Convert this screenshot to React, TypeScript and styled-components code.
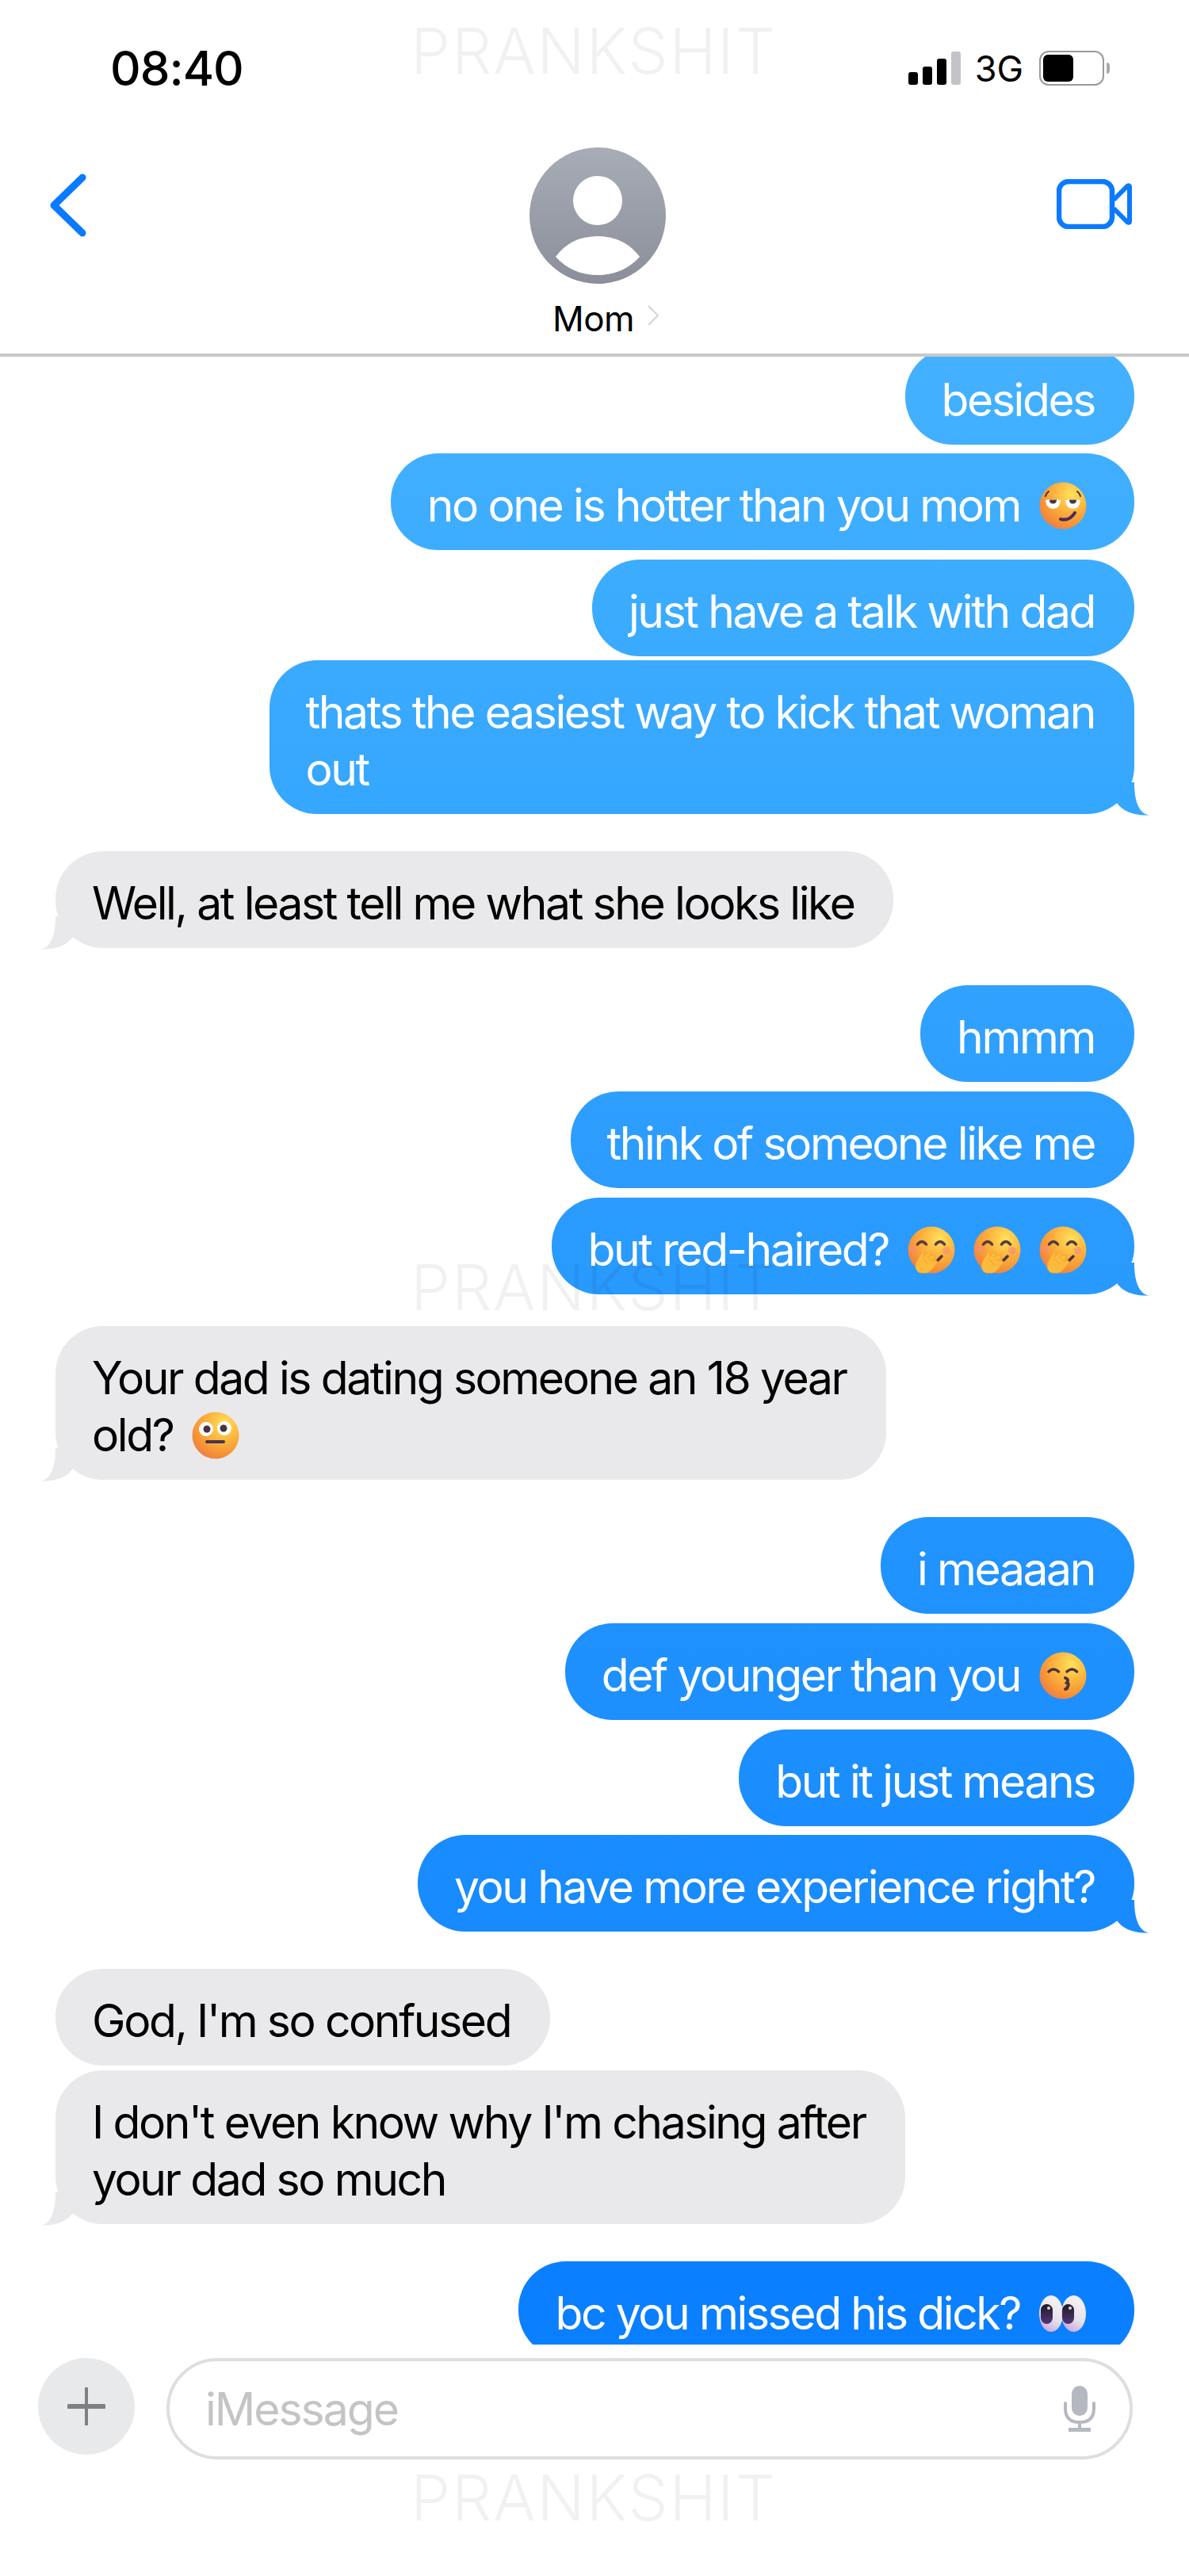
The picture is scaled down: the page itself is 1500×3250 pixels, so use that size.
import type { FC, ReactNode } from 'react';
import styled, { createGlobalStyle } from 'styled-components';

const GlobalStyle = createGlobalStyle`
  html, body {
    margin: 0;
    padding: 0;
    background: #fff;
  }
`;

const Face: FC<{ id: string; children: ReactNode }> = ({ id, children }) => (
  <EmojiSvg viewBox="0 0 60 60">
    <defs>
      <radialGradient id={id} cx="0.68" cy="0.26" r="0.82">
        <stop offset="0" stopColor="#ffe25a" />
        <stop offset="0.42" stopColor="#fdb63f" />
        <stop offset="0.82" stopColor="#f58f35" />
        <stop offset="0.97" stopColor="#ee7f4e" />
        <stop offset="1" stopColor="#ee6f8a" />
      </radialGradient>
    </defs>
    <circle cx="30" cy="30" r="29.5" fill={`url(#${id})`} />
    {children}
  </EmojiSvg>
);

const SmirkEmoji = () => (
  <Face id="smirk">
    <path d="M12 12q-3 2-4 6M48 12q3 2 4 6" fill="none" stroke="#4a3340" strokeWidth="2" strokeLinecap="round" />
    <path d="M8 23q9-2 19 0q-1 11-9.5 11T8 23z" fill="#fff" />
    <path d="M33 23q9-2 19 0q-1 11-9.5 11T33 23z" fill="#fff" />
    <path d="M13 22.5h9q0 5-4.5 5t-4.5-5zM38 22.5h9q0 5-4.5 5t-4.5-5z" fill="#4a3340" />
    <path d="M27 47q11 3 18-8" fill="none" stroke="#4b2a5c" strokeWidth="4" strokeLinecap="round" />
  </Face>
);

const HandEmoji = () => (
  <Face id="hand">
    <path d="M12.500 23q5.500-7 11 0M35.500 23q5.500-7 11 0" fill="none" stroke="#5a3a44" strokeWidth="3.500" strokeLinecap="round" />
    <circle cx="7" cy="29" r="5" fill="#f98a7a" opacity="0.6" />
    <circle cx="49" cy="31" r="5" fill="#f98a7a" opacity="0.6" />
    <path d="M43 38l-5 5" stroke="#4a3340" strokeWidth="3.500" strokeLinecap="round" />
    <path
      d="M17 59q-6-1-7-8q0-4 3-9l5-9q2-2 3 1l-1 5l6-6q2-1 3 1l-2 4l6-2q2 0 2 2l-3 5l5 1q2 2-1 4l-4 5q-4 5-8 6z"
      fill="#fdbb3e"
      stroke="#f5a52e"
      strokeWidth="1"
    />
    <path d="M19 41l7 7M25 38l7 7" stroke="#f39b2c" strokeWidth="1" />
  </Face>
);

const FlushEmoji = () => (
  <Face id="flush">
    <circle cx="18" cy="22" r="9" fill="#fff" />
    <circle cx="41" cy="21" r="9" fill="#fff" />
    <circle cx="19" cy="22" r="4.500" fill="#4a3340" />
    <circle cx="40" cy="21" r="4.500" fill="#4a3340" />
    <path d="M19 38h21" stroke="#4b3350" strokeWidth="4" strokeLinecap="round" />
  </Face>
);

const KissEmoji = () => (
  <Face id="kiss">
    <path d="M12 25q6-6 12.500 0M35 25q6.500-6 12.500 0" fill="none" stroke="#4a3340" strokeWidth="3.500" strokeLinecap="round" />
    <path d="M33 33q5 2 2 6q3 1 1 5q-1 3-3 3" fill="none" stroke="#4a3340" strokeWidth="4" strokeLinecap="round" />
  </Face>
);

const EyesEmoji = () => (
  <EmojiSvg viewBox="0 0 60 60">
    <defs>
      <linearGradient id="eyeWhite" x1="0.7" y1="0" x2="0.3" y2="1">
        <stop offset="0" stopColor="#f6f4f6" />
        <stop offset="0.6" stopColor="#e6e0e8" />
        <stop offset="1" stopColor="#c9a6e0" />
      </linearGradient>
      <linearGradient id="eyeDark" x1="0.5" y1="0" x2="0.5" y2="1">
        <stop offset="0" stopColor="#1e1a22" />
        <stop offset="1" stopColor="#53357c" />
      </linearGradient>
    </defs>
    <ellipse cx="15" cy="30" rx="15" ry="23" fill="url(#eyeWhite)" />
    <ellipse cx="43.500" cy="30" rx="15.500" ry="23" fill="url(#eyeWhite)" />
    <rect x="2" y="18" width="15" height="25" rx="7.500" fill="url(#eyeDark)" />
    <rect x="29" y="18" width="15" height="25" rx="7.500" fill="url(#eyeDark)" />
    <circle cx="12" cy="23" r="2" fill="#d8d4dc" />
    <circle cx="39" cy="23" r="2" fill="#d8d4dc" />
  </EmojiSvg>
);

type Row = {
  from: 'me' | 'them';
  top: number;
  tail?: boolean;
  lines: ReactNode[];
};

export default function App() {
  const rows: Row[] = [
    { from: 'me', top: -11, lines: ['besides'] },
    { from: 'me', top: 11, lines: [<>no one is hotter than you mom<EmojiGap><SmirkEmoji /></EmojiGap></>] },
    { from: 'me', top: 12, lines: ['just have a talk with dad'] },
    { from: 'me', top: 5, tail: true, lines: ['thats the easiest way to kick that woman', 'out'] },
    { from: 'them', top: 47, tail: true, lines: ['Well, at least tell me what she looks like'] },
    { from: 'me', top: 47, lines: ['hmmm'] },
    { from: 'me', top: 12, lines: ['think of someone like me'] },
    {
      from: 'me',
      top: 12,
      tail: true,
      lines: [<>but red-haired?<EmojiGap><HandEmoji /><HandEmoji /><HandEmoji /></EmojiGap></>],
    },
    { from: 'them', top: 40, tail: true, lines: ['Your dad is dating someone an 18 year', <>old?<EmojiGap><FlushEmoji /></EmojiGap></>] },
    { from: 'me', top: 47, lines: ['i meaaan'] },
    { from: 'me', top: 12, lines: [<>def younger than you<EmojiGap><KissEmoji /></EmojiGap></>] },
    { from: 'me', top: 12, lines: ['but it just means'] },
    { from: 'me', top: 11, tail: true, lines: ['you have more experience right?'] },
    { from: 'them', top: 47, lines: ["God, I'm so confused"] },
    { from: 'them', top: 6, tail: true, lines: ["I don't even know why I'm chasing after", 'your dad so much'] },
    { from: 'me', top: 47, lines: [<>bc you missed his dick?<EmojiGap><EyesEmoji /></EmojiGap></>] },
  ];

  return (
    <Page>
      <GlobalStyle />
      <Watermark $top={33}>PRANKSHIT</Watermark>
      <Watermark $top={1593}>PRANKSHIT</Watermark>
      <Watermark $top={3120}>PRANKSHIT</Watermark>

      <StatusBar>
        <Clock>08:40</Clock>
        <StatusIcons>
          <Signal>
            <SignalBar $height={16} />
            <SignalBar $height={23} />
            <SignalBar $height={33} />
            <SignalBar $height={42} $off />
          </Signal>
          <Network>3G</Network>
          <Battery>
            <BatteryLevel />
          </Battery>
          <BatteryNub />
        </StatusIcons>
      </StatusBar>

      <NavBar>
        <BackIcon viewBox="0 0 46 80">
          <path d="M41 5L5 40l36 35" fill="none" stroke="#0a7aff" strokeWidth="9" strokeLinecap="round" strokeLinejoin="round" />
        </BackIcon>
        <Contact>
          <svg width="172" height="172" viewBox="0 0 172 172">
            <defs>
              <linearGradient id="avatar" x1="0" y1="0" x2="0" y2="1">
                <stop offset="0" stopColor="#a8acb6" />
                <stop offset="1" stopColor="#8b8f99" />
              </linearGradient>
            </defs>
            <circle cx="86" cy="86" r="86" fill="url(#avatar)" />
            <circle cx="86" cy="67" r="31" fill="#fff" />
            <path d="M33 138Q52 112 86 112T139 138Q118 161 86 161T33 138z" fill="#fff" />
          </svg>
          <ContactName>
            Mom
            <svg width="16" height="26" viewBox="0 0 16 26">
              <path d="M2 1l12 12L2 25" fill="none" stroke="#d4d4d6" strokeWidth="2" />
            </svg>
          </ContactName>
        </Contact>
        <VideoIcon viewBox="0 0 95 63">
          <rect x="3" y="3" width="67" height="57" rx="12" fill="none" stroke="#0a7aff" strokeWidth="6.500" />
          <path d="M72 26L89 9q3-2 3 1v43q0 3-3 1L72 37" fill="none" stroke="#0a7aff" strokeWidth="6" strokeLinejoin="round" />
        </VideoIcon>
      </NavBar>

      <Thread>
        {rows.map((row, i) => (
          <Bubble key={i} $from={row.from} $top={row.top} $tail={row.tail}>
            {row.lines.map((line, j) => (
              <Line key={j}>{line}</Line>
            ))}
          </Bubble>
        ))}
      </Thread>

      <Composer>
        <PlusButton>
          <svg width="48" height="48" viewBox="0 0 48 48">
            <path d="M24 1v46" stroke="#7f8084" strokeWidth="4" strokeLinecap="round" />
            <path d="M2 24h44" stroke="#7f8084" strokeWidth="6" strokeLinecap="round" />
          </svg>
        </PlusButton>
        <InputBox>
          <Placeholder>iMessage</Placeholder>
          <svg width="42" height="58" viewBox="0 0 42 58">
            <rect x="11" y="0" width="20" height="38" rx="10" fill="#b4b8c0" />
            <path d="M3 22v7q0 17 18 17t18-17v-7" fill="none" stroke="#b4b8c0" strokeWidth="4" strokeLinecap="round" />
            <path d="M21 46v8" stroke="#b4b8c0" strokeWidth="4" />
            <rect x="7" y="53" width="28" height="5" fill="#b4b8c0" />
          </svg>
        </InputBox>
      </Composer>
    </Page>
  );
}

const Page = styled.div`
  position: relative;
  width: 1500px;
  height: 3250px;
  background: #fff;
  overflow: hidden;
  font-family: Inter, 'Liberation Sans', sans-serif;
  color: #000;
`;

const Watermark = styled.div<{ $top: number }>`
  position: absolute;
  z-index: 3;
  left: 518px;
  top: ${({ $top }) => $top}px;
  font-size: 80px;
  line-height: 62px;
  font-weight: 300;
  letter-spacing: 1.5px;
  color: rgba(0, 0, 0, 0.055);
  pointer-events: none;
`;

const StatusBar = styled.div`
  display: flex;
  justify-content: space-between;
  align-items: center;
  box-sizing: border-box;
  height: 172px;
  padding: 0 100px 0 139px;
`;

const Clock = styled.div`
  font-size: 60px;
  font-weight: 500;
  letter-spacing: -1px;
`;

const StatusIcons = styled.div`
  display: flex;
  align-items: center;
`;

const Signal = styled.div`
  display: flex;
  align-items: flex-end;
  gap: 6px;
  height: 42px;
`;

const SignalBar = styled.div<{ $height: number; $off?: boolean }>`
  width: 12px;
  height: ${({ $height }) => $height}px;
  border-radius: 3px;
  background: ${({ $off }) => ($off ? '#c3c3c8' : '#000')};
`;

const Network = styled.div`
  font-size: 45px;
  font-weight: 400;
  margin-left: 18px;
  margin-right: 20px;
`;

const Battery = styled.div`
  width: 82px;
  height: 44px;
  box-sizing: border-box;
  border: 2.5px solid #9a9a9a;
  border-radius: 12px;
  padding: 2.5px 3px;
`;

const BatteryLevel = styled.div`
  width: 38px;
  height: 34px;
  border-radius: 6px;
  background: #000;
`;

const BatteryNub = styled.div`
  width: 4px;
  height: 14px;
  margin-left: 3px;
  border-radius: 0 4px 4px 0;
  background: #a8a8a8;
`;

const NavBar = styled.div`
  display: grid;
  grid-template-columns: 1fr auto 1fr;
  align-items: start;
  height: 278px;
  box-sizing: border-box;
  padding: 14px 72px 0 63px;
  border-bottom: 4px solid #c8c8c8;
`;

const BackIcon = styled.svg`
  width: 46px;
  height: 80px;
  margin-top: 33px;
`;

const VideoIcon = styled.svg`
  justify-self: end;
  width: 95px;
  height: 63px;
  margin-top: 40px;
`;

const Contact = styled.div`
  display: flex;
  flex-direction: column;
  align-items: center;
  margin-left: 16px;
  svg {
    display: block;
  }
`;

const ContactName = styled.div`
  display: flex;
  align-items: center;
  gap: 16px;
  margin-top: 16px;
  margin-left: 22px;
  font-size: 44px;
  line-height: 56px;
  letter-spacing: -0.5px;
  svg {
    margin-top: -8px;
  }
`;

const Thread = styled.div`
  display: flex;
  flex-direction: column;
  height: 2508px;
  padding: 0 69px 0 70px;
  overflow: hidden;
`;

const Bubble = styled.div<{ $from: 'me' | 'them'; $top: number; $tail?: boolean }>`
  position: relative;
  flex: none;
  align-self: ${({ $from }) => ($from === 'me' ? 'flex-end' : 'flex-start')};
  margin-top: ${({ $top }) => $top}px;
  padding: 30px 50px 20px 46px;
  border-radius: 60px;
  font-size: 57px;
  line-height: 72px;
  letter-spacing: -2.4px;
  white-space: nowrap;
  color: ${({ $from }) => ($from === 'me' ? '#fff' : '#000')};
  background: ${({ $from }) =>
    $from === 'me'
      ? 'linear-gradient(180deg, #43b1ff 450px, #37a8fe 950px, #2a9bfe 1550px, #188bfe 2400px, #0a7fff 2850px) fixed'
      : '#e9e9eb'};

  &::after {
    content: ${({ $tail }) => ($tail ? "''" : 'none')};
    position: absolute;
    bottom: -2px;
    width: 42px;
    height: 42px;
    background: inherit;
    ${({ $from }) =>
      $from === 'me'
        ? `right: -20px; clip-path: path('M0 0H22C22 24 28 40 41 41.5C28 42 10 40 0 26Z');`
        : `left: -20px; clip-path: path('M42 0H20C20 24 14 40 1 41.5C14 42 32 40 42 26Z');`}
  }
`;

const Line = styled.div`
  display: flex;
  align-items: center;
  height: 72px;
`;

const EmojiGap = styled.span`
  display: inline-flex;
  gap: 23px;
  margin-left: 24px;
  margin-right: 10px;
`;

const EmojiSvg = styled.svg`
  display: block;
  width: 60px;
  height: 60px;
`;

const Composer = styled.div`
  display: flex;
  align-items: flex-start;
  gap: 40px;
  padding: 17px 71px 0 48px;
`;

const PlusButton = styled.div`
  display: flex;
  align-items: center;
  justify-content: center;
  flex: none;
  width: 122px;
  height: 122px;
  border-radius: 50%;
  background: #e8e9eb;
`;

const InputBox = styled.div`
  display: flex;
  align-items: center;
  justify-content: space-between;
  flex: 1;
  box-sizing: border-box;
  height: 128px;
  padding: 0 42px 0 45px;
  border: 4px solid #dedede;
  border-radius: 64px;
`;

const Placeholder = styled.div`
  font-size: 57px;
  letter-spacing: -2px;
  color: #c4c4c6;
`;
